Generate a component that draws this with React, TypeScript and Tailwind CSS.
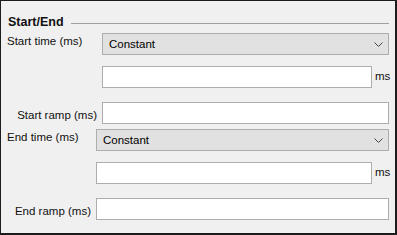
import React from "react";

function Chevron() {
  return (
    <svg width="9" height="5" viewBox="0 0 9 5" className="block">
      <polyline points="0.5,0.5 4.5,4.5 8.5,0.5" fill="none" stroke="#444" strokeWidth="1" />
    </svg>
  );
}

function Combo({ value }: { value: string }) {
  return (
    <div className="flex-1 h-[22px] bg-[#e1e1e1] border border-[#adadad] flex items-center justify-between pl-[6px] pr-[5px]">
      <span className="text-[#000]">{value}</span>
      <Chevron />
    </div>
  );
}

function Field() {
  return <div className="flex-1 h-[22px] bg-white border border-[#adadad]" />;
}

function Section({ label, ramp, labelWidth }: { label: string; ramp: string; labelWidth: string }) {
  return (
    <div className="flex flex-col">
      <div className="flex items-start h-[22px]">
        <div className={`${labelWidth} shrink-0 pt-[1px]`}>{label}</div>
        <Combo value="Constant" />
      </div>
      <div className="flex items-center h-[23px] mt-[10px]">
        <div className={`${labelWidth} shrink-0`} />
        <Field />
        <span className="w-[17px] shrink-0 pl-[3px] pb-[2px]">ms</span>
      </div>
      <div className="flex items-center h-[22px] mt-[14px]">
        <div className={`${labelWidth} shrink-0 text-right pr-[5px] pt-[3px]`}>{ramp}</div>
        <Field />
      </div>
    </div>
  );
}

export default function App() {
  return (
    <div
      className="w-[397px] h-[235px] bg-[#f0f0f0] border-l border-t border-r-2 border-b-2 border-[#1c1c1c] text-[11.5px] leading-[14px] text-[#111] pl-[6px] pr-[6px]"
      style={{ fontFamily: '"Liberation Sans", Arial, sans-serif' }}
    >
      <div className="flex items-center pt-[14px] h-[32px] pb-[4px]">
        <span className="font-bold text-[12.5px] pl-[1px]">Start/End</span>
        <div className="flex-1 h-px bg-[#a0a0a0] ml-[7px] mt-[2px]" />
      </div>
      <Section label="Start time (ms)" ramp="Start ramp (ms)" labelWidth="w-[95px]" />
      <div className="h-[5px]" />
      <Section label="End time (ms)" ramp="End ramp (ms)" labelWidth="w-[89px]" />
    </div>
  );
}
